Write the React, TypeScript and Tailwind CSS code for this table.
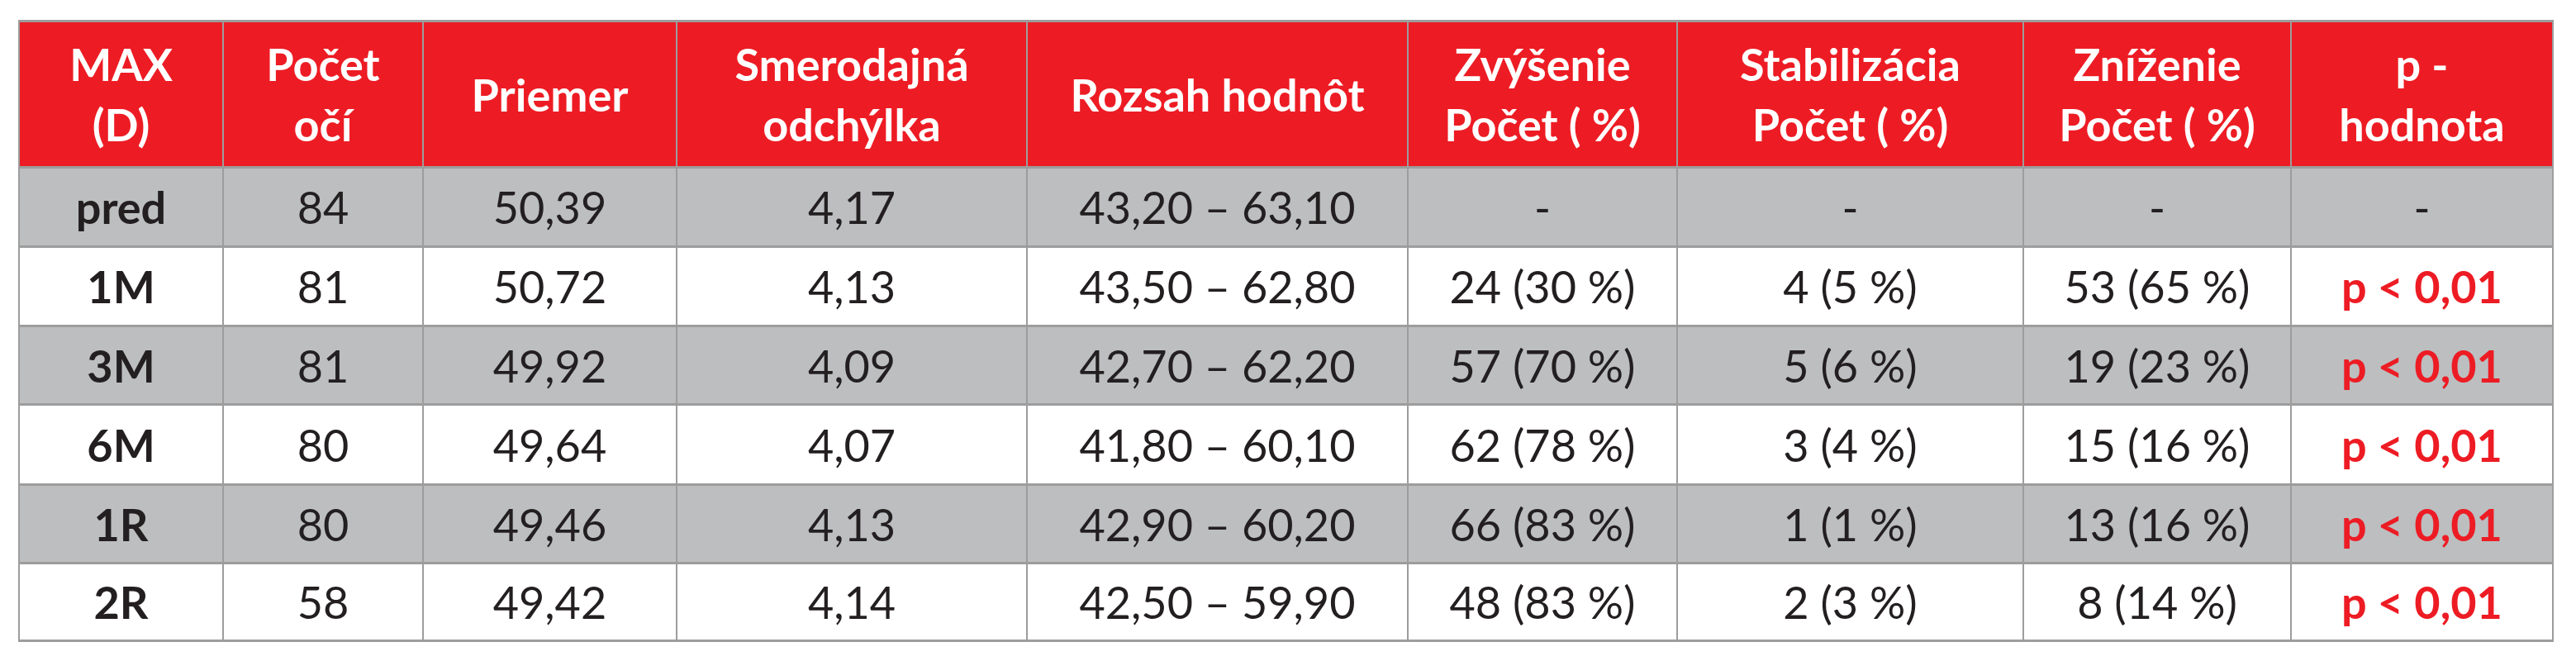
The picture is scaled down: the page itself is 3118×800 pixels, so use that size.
import React from 'react';

type Row = {
  label: string;
  eyes: string;
  mean: string;
  sd: string;
  range: string;
  up: string;
  stable: string;
  down: string;
  p: string;
  h: string;
};

const columns = [
  { w: 'w-[247px]', title: ['MAX', '(D)'] },
  { w: 'w-[242px]', title: ['Počet', 'očí'] },
  { w: 'w-[307px]', title: ['Priemer'] },
  { w: 'w-[424px]', title: ['Smerodajná', 'odchýlka'] },
  { w: 'w-[461px]', title: ['Rozsah hodnôt'] },
  { w: 'w-[326px]', title: ['Zvýšenie', 'Počet ( %)'] },
  { w: 'w-[419px]', title: ['Stabilizácia', 'Počet ( %)'] },
  { w: 'w-[324px]', title: ['Zníženie', 'Počet ( %)'] },
  { w: 'w-[317px]', title: ['p -', 'hodnota'] },
];

const rows: Row[] = [
  { label: 'pred', eyes: '84', mean: '50,39', sd: '4,17', range: '43,20 – 63,10', up: '-', stable: '-', down: '-', p: '-', h: 'h-[96px]' },
  { label: '1M', eyes: '81', mean: '50,72', sd: '4,13', range: '43,50 – 62,80', up: '24 (30 %)', stable: '4 (5 %)', down: '53 (65 %)', p: 'p < 0,01', h: 'h-[96px]' },
  { label: '3M', eyes: '81', mean: '49,92', sd: '4,09', range: '42,70 – 62,20', up: '57 (70 %)', stable: '5 (6 %)', down: '19 (23 %)', p: 'p < 0,01', h: 'h-[95px]' },
  { label: '6M', eyes: '80', mean: '49,64', sd: '4,07', range: '41,80 – 60,10', up: '62 (78 %)', stable: '3 (4 %)', down: '15 (16 %)', p: 'p < 0,01', h: 'h-[97px]' },
  { label: '1R', eyes: '80', mean: '49,46', sd: '4,13', range: '42,90 – 60,20', up: '66 (83 %)', stable: '1 (1 %)', down: '13 (16 %)', p: 'p < 0,01', h: 'h-[95px]' },
  { label: '2R', eyes: '58', mean: '49,42', sd: '4,14', range: '42,50 – 59,90', up: '48 (83 %)', stable: '2 (3 %)', down: '8 (14 %)', p: 'p < 0,01', h: 'h-[94px]' },
];

const cell = 'border-x-2 border-y-[3px] border-[#9d9d9d] text-center align-middle p-0';

export default function App() {
  return (
    <div className="min-h-[800px] w-[3118px] bg-white pl-[22px] pt-[24px] font-['Lato','Liberation_Sans',sans-serif]">
      <table className="table-fixed border-collapse w-[3069px] text-[54px] leading-[73px]">
        <colgroup>
          {columns.map((c, i) => (
            <col key={i} className={c.w} />
          ))}
        </colgroup>
        <thead>
          <tr className="h-[177px] bg-[#ed1c24] text-white">
            {columns.map((c, i) => (
              <th key={i} className={`${cell} font-bold`}>
                {c.title.map((t, j) => (
                  <div key={j}>{t}</div>
                ))}
              </th>
            ))}
          </tr>
        </thead>
        <tbody className="text-[#231f20]">
          {rows.map((r, i) => (
            <tr key={r.label} className={`${r.h} ${i % 2 === 0 ? 'bg-[#bcbec0]' : 'bg-white'}`}>
              <td className={`${cell} font-bold`}>{r.label}</td>
              <td className={cell}>{r.eyes}</td>
              <td className={cell}>{r.mean}</td>
              <td className={cell}>{r.sd}</td>
              <td className={cell}>{r.range}</td>
              <td className={cell}>{r.up}</td>
              <td className={cell}>{r.stable}</td>
              <td className={cell}>{r.down}</td>
              <td className={`${cell} ${r.p === '-' ? '' : 'font-bold text-[#ed1c24]'}`}>{r.p}</td>
            </tr>
          ))}
        </tbody>
      </table>
    </div>
  );
}
